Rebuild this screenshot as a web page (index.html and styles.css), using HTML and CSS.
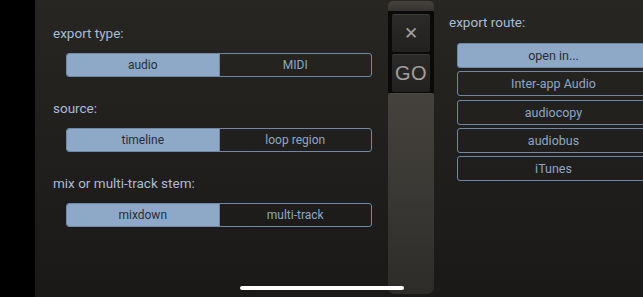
FILE: index.html
```html
<!DOCTYPE html>
<html lang="en">

<head>
    <meta charset="UTF-8">
    <meta name="viewport" content="width=device-width, initial-scale=1.0">
    <title>Export</title>
    <link rel="stylesheet" href="styles.css">
</head>

<body>
    <div class="app">
        <div class="notch"></div>
        <div class="screen">
            <div class="left">
                <div class="section">
                    <p class="label">export type:</p>
                    <div class="segment">
                        <button class="active">audio</button>
                        <button>MIDI</button>
                    </div>
                </div>
                <div class="section">
                    <p class="label">source:</p>
                    <div class="segment">
                        <button class="active">timeline</button>
                        <button>loop region</button>
                    </div>
                </div>
                <div class="section">
                    <p class="label">mix or multi-track stem:</p>
                    <div class="segment">
                        <button class="active">mixdown</button>
                        <button>multi-track</button>
                    </div>
                </div>
            </div>
            <div class="panel">
                <div class="cap"></div>
                <div class="tools">
                    <button class="tool close">&#x2715;</button>
                    <button class="tool go">GO</button>
                </div>
                <div class="slider"></div>
            </div>
            <div class="right">
                <p class="label">export route:</p>
                <div class="routes">
                    <button class="active">open in...</button>
                    <button>Inter-app Audio</button>
                    <button>audiocopy</button>
                    <button>audiobus</button>
                    <button>iTunes</button>
                </div>
            </div>
        </div>
        <div class="home"></div>
    </div>
</body>

</html>
```

FILE: styles.css
```css
* {
    padding: 0;
    margin: 0;
    box-sizing: border-box;
}

body {
    background: #000;
    font-family: Roboto, "Noto Sans", sans-serif;
    overflow: hidden;
}

.app {
    position: relative;
    display: flex;
    width: 643px;
    height: 297px;
    overflow: hidden;
}

.notch {
    width: 35px;
    flex-shrink: 0;
    background: #000;
}

.screen {
    flex: 1;
    display: flex;
    background: linear-gradient(180deg, #282622 0%, #211f1d 50%, #1a1918 100%);
}

.label {
    color: #a7bcd7;
    font-size: 13.5px;
    line-height: 16px;
}

/* left column */
.left {
    width: 353px;
    flex-shrink: 0;
    padding: 25px 0 0 18px;
}

.section {
    margin-bottom: 23px;
}

.segment {
    display: flex;
    width: 306px;
    height: 24px;
    margin: 12px 0 0 13px;
    border: 1px solid #7088a6;
    border-radius: 3px;
    overflow: hidden;
}

.segment button {
    flex: 1;
    border: none;
    background: transparent;
    color: #8ea6c6;
    font-family: inherit;
    font-size: 12px;
}

.segment button + button {
    border-left: 1px solid #7088a6;
}

.segment button.active {
    background: #8ea8c8;
    color: #2b2e34;
}

/* middle panel */
.panel {
    width: 46px;
    flex-shrink: 0;
    display: flex;
    flex-direction: column;
    padding: 1px 0 3px;
}

.cap {
    height: 10px;
    border-radius: 5px 5px 0 0;
    background: linear-gradient(180deg, #46433f, #353230);
}

.tools {
    display: flex;
    flex-direction: column;
    gap: 2px;
    padding: 3px 4px 1px;
    background: #0b0a0a;
}

.tool {
    height: 38px;
    border: none;
    border-top: 1px solid #3c3a37;
    border-radius: 2px;
    background: linear-gradient(180deg, #2c2a28, #232120);
    color: #a0a0a2;
    font-family: "Liberation Sans", sans-serif;
}

.tool.close {
    font-size: 17px;
}

.tool.go {
    font-size: 20px;
    letter-spacing: 0.5px;
}

.slider {
    flex: 1;
    border-radius: 3px 3px 7px 7px;
    border-top: 1px solid #4e4b46;
    background: linear-gradient(180deg, #45423d 0%, #3a3834 50%, #2e2c29 100%);
}

/* right column */
.right {
    flex: 1;
    padding: 14px 0 0 15px;
}

.routes {
    display: flex;
    flex-direction: column;
    gap: 3.3px;
    width: 193px;
    margin: 13px 0 0 8px;
}

.routes button {
    height: 25px;
    border: 1px solid #7088a6;
    border-radius: 3px;
    background: transparent;
    color: #8ea6c6;
    font-family: inherit;
    font-size: 12.5px;
}

.routes button.active {
    background: #8ea8c8;
    color: #2b2e34;
}

.home {
    position: absolute;
    left: 240px;
    top: 286px;
    width: 164px;
    height: 4px;
    border-radius: 2px;
    background: #fff;
}
```
